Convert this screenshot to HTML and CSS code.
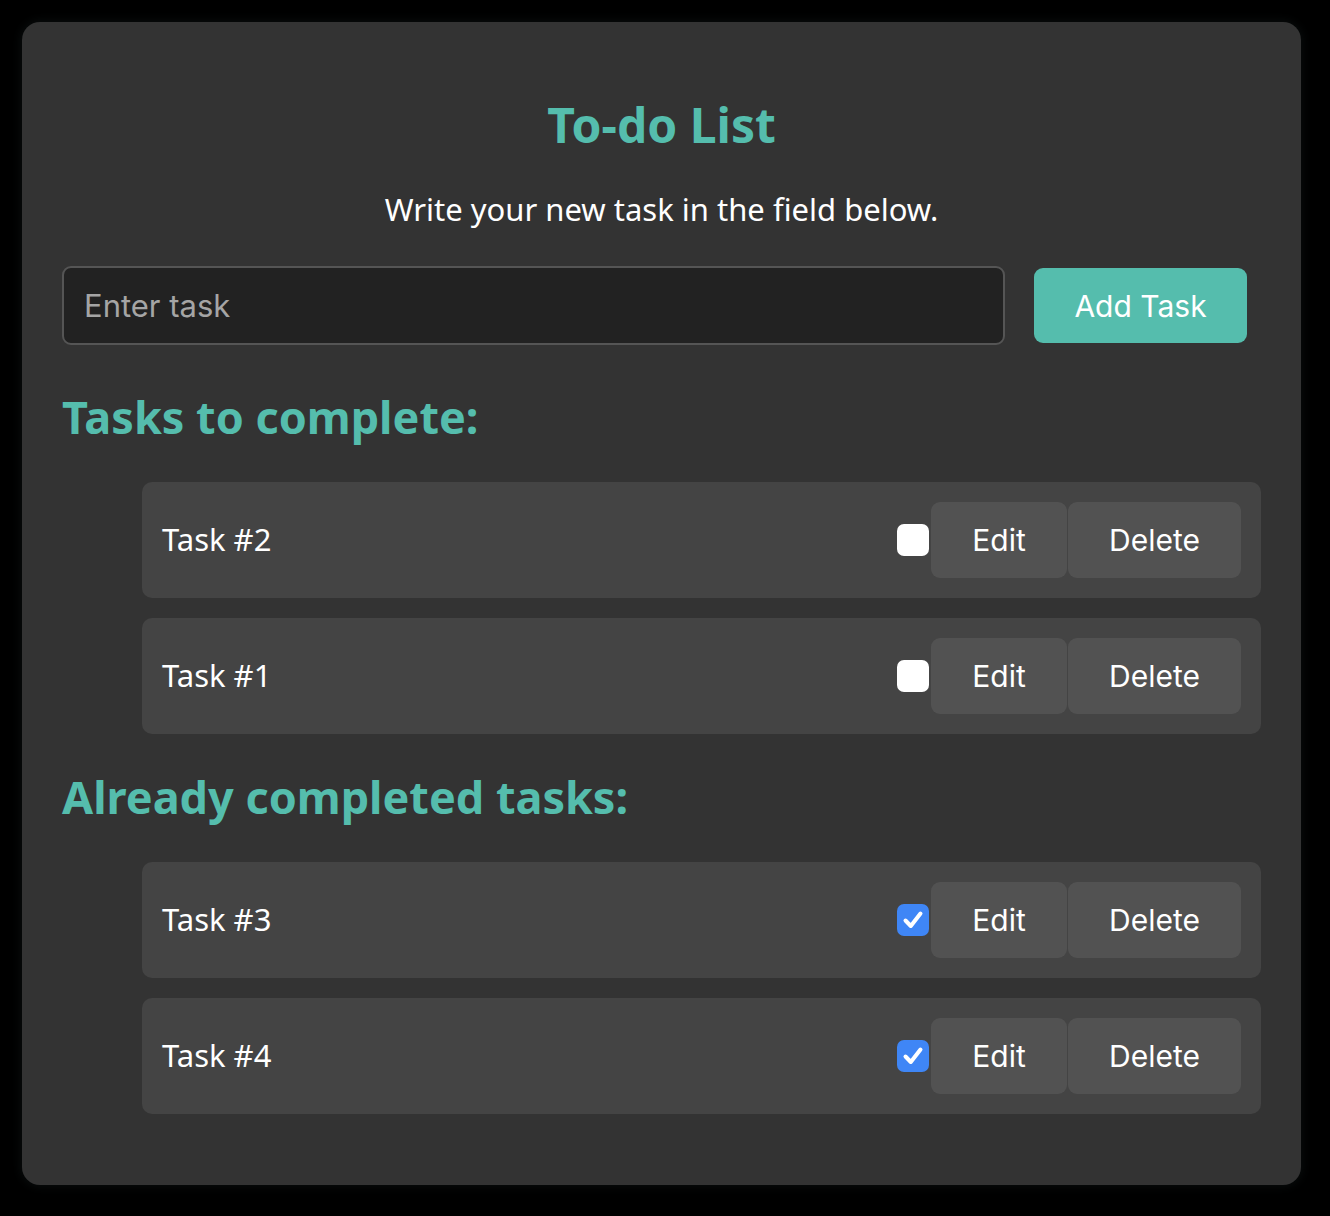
FILE: index.html
```html
<!DOCTYPE html>
<html lang="en">
<head>
<meta charset="utf-8">
<title>To-do List</title>
<link rel="stylesheet" href="styles.css">
</head>
<body>
<main class="card">
  <h1 class="title">To-do List</h1>
  <p class="subtitle">Write your new task in the field below.</p>
  <div class="new-task">
    <input class="task-input" type="text" placeholder="Enter task">
    <button class="add-btn">Add Task</button>
  </div>

  <h2 class="section-title">Tasks to complete:</h2>
  <ul class="task-list">
    <li class="task">
      <span class="task-name">Task #2</span>
      <span class="check"></span>
      <button class="btn">Edit</button>
      <button class="btn">Delete</button>
    </li>
    <li class="task">
      <span class="task-name">Task #1</span>
      <span class="check"></span>
      <button class="btn">Edit</button>
      <button class="btn">Delete</button>
    </li>
  </ul>

  <h2 class="section-title">Already completed tasks:</h2>
  <ul class="task-list">
    <li class="task">
      <span class="task-name">Task #3</span>
      <span class="check checked"><svg viewBox="0 0 32 32" width="32" height="32"><path d="M8.5 16.5 L13.8 22 L23.5 9.5" fill="none" stroke="#fff" stroke-width="4" stroke-linecap="round" stroke-linejoin="round"/></svg></span>
      <button class="btn">Edit</button>
      <button class="btn">Delete</button>
    </li>
    <li class="task">
      <span class="task-name">Task #4</span>
      <span class="check checked"><svg viewBox="0 0 32 32" width="32" height="32"><path d="M8.5 16.5 L13.8 22 L23.5 9.5" fill="none" stroke="#fff" stroke-width="4" stroke-linecap="round" stroke-linejoin="round"/></svg></span>
      <button class="btn">Edit</button>
      <button class="btn">Delete</button>
    </li>
  </ul>
</main>
</body>
</html>
```
FILE: styles.css
```css
html, body {
  margin: 0;
  padding: 0;
  background: #000;
}
body {
  padding: 22px 29px 31px 22px;
  font-family: "Noto Sans", "Open Sans", sans-serif;
  color: #fff;
}
.card {
  background: #333;
  border-radius: 18px;
  box-shadow: 0 0 12px rgba(20, 28, 28, 0.6);
  padding: 40px 40px 71px 40px;
  box-sizing: border-box;
  width: 1279px;
  height: 1163px;
}
.title {
  margin: 31px 0 0 0;
  text-align: center;
  color: #55bdad;
  font-size: 48px;
  line-height: 64px;
  font-weight: 700;
}
.subtitle {
  margin: 32px 0 0 0;
  text-align: center;
  font-size: 31px;
  line-height: 40px;
}
.new-task {
  margin-top: 37px;
  display: flex;
  align-items: center;
  gap: 29px;
}
.task-input {
  width: 943px;
  height: 79px;
  box-sizing: border-box;
  background: #222;
  border: 2px solid #555;
  border-radius: 9px;
  padding: 0 20px;
  font-family: Inter, "Liberation Sans", sans-serif;
  font-size: 31px;
  color: #fff;
  outline: none;
}
.task-input::placeholder {
  color: #a5a5a5;
}
.add-btn, .btn {
  font-family: Inter, "Liberation Sans", sans-serif;
  font-size: 30px;
  color: #fff;
  border: none;
  cursor: pointer;
}
.add-btn {
  height: 75px;
  width: 213px;
  background: #55bdad;
  border-radius: 9px;
}
.section-title {
  margin: 42px 0 0 0;
  color: #55bdad;
  font-size: 45px;
  line-height: 60px;
  font-weight: 700;
}
.task-list {
  list-style: none;
  margin: 35px 0 0 80px;
  padding: 0;
  display: flex;
  flex-direction: column;
  gap: 20px;
}
.task {
  background: #444;
  border-radius: 10px;
  padding: 20px;
  height: 116px;
  box-sizing: border-box;
  display: flex;
  align-items: center;
}
.task-name {
  flex: 1;
  font-size: 31px;
  margin-top: -2px;
}
.check {
  width: 32px;
  height: 32px;
  box-sizing: border-box;
  border-radius: 7px;
  background: #fff;
  display: block;
  margin-right: 2px;
}
.check.checked {
  background: #3f86f6;
}
.check svg {
  display: block;
}
.btn {
  height: 76px;
  background: #525252;
  border-radius: 9px;
  padding: 0;
}
.btn:nth-of-type(1) {
  width: 136px;
  margin-right: 1px;
}
.btn:nth-of-type(2) {
  width: 173px;
}
.task-list + .section-title {
  margin-top: 33px;
}
```
